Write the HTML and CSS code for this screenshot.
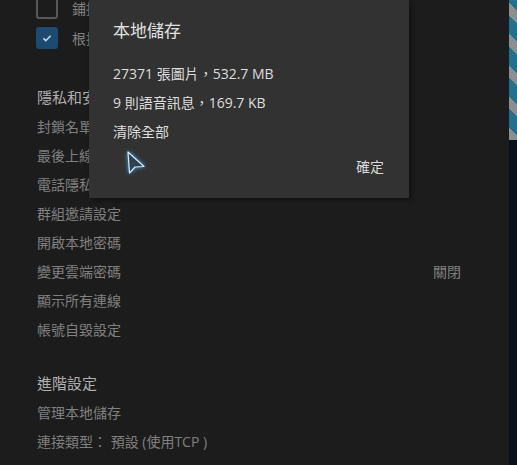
FILE: index.html
```html
<!DOCTYPE html>
<html lang="zh-Hant">
<head>
  <meta charset="UTF-8" />
  <title>設定</title>
  <link rel="stylesheet" href="styles.css">
</head>
<body>
  <div class="page">
    <div class="settings">
      <div class="check-row">
        <span class="box"></span>
        <span class="check-label">鋪排聊天背景</span>
      </div>
      <div class="check-row">
        <span class="box checked">
          <svg viewBox="0 0 20 20"><path d="M6 10.5 L8.7 13 L14 7.5" /></svg>
        </span>
        <span class="check-label">根據日間模式切換</span>
      </div>

      <h3 class="section">隱私和安全</h3>
      <div class="item">封鎖名單</div>
      <div class="item">最後上線時間</div>
      <div class="item">電話隱私設定</div>
      <div class="item">群組邀請設定</div>
      <div class="item">開啟本地密碼</div>
      <div class="item"><span>變更雲端密碼</span><span class="value">關閉</span></div>
      <div class="item">顯示所有連線</div>
      <div class="item">帳號自毀設定</div>

      <h3 class="section advanced">進階設定</h3>
      <div class="item">管理本地儲存</div>
      <div class="item">連接類型： 預設 (使用TCP )</div>
    </div>
    <div class="edge"></div>
  </div>

  <div class="dialog">
    <h2 class="dialog-title">本地儲存</h2>
    <p class="line">27371 張圖片，532.7 MB</p>
    <p class="line">9 則語音訊息，169.7 KB</p>
    <p class="line">清除全部</p>
    <div class="actions">
      <button class="ok">確定</button>
    </div>
  </div>

  <svg class="cursor" viewBox="0 0 22 26">
    <path d="M2 1 L3.5 22 L9 16 L18 15.5 Z" />
  </svg>
</body>
</html>
```

FILE: styles.css
```css
* {
  margin: 0;
  padding: 0;
  box-sizing: border-box;
}
body {
  background: #1c1c1c;
  font-family: "Open Sans", "Noto Sans CJK TC", sans-serif;
  overflow: hidden;
  height: 465px;
}
.page {
  display: flex;
  height: 465px;
}
.settings {
  flex: 1;
  padding: 0 48px 0 36px;
  margin-top: -7px;
}
.check-row {
  display: flex;
  align-items: center;
  height: 30px;
  gap: 14px;
}
.box {
  width: 22px;
  height: 22px;
  border: 2px solid #585858;
  border-radius: 3px;
  display: flex;
  align-items: center;
  justify-content: center;
}
.box.checked {
  background: #1c4a71;
  border-color: #1c4a71;
}
.box svg {
  width: 20px;
  height: 20px;
  fill: none;
  stroke: #c9d6e2;
  stroke-width: 1.8;
}
.check-label {
  font-size: 14px;
  color: #808080;
}
.section {
  font-size: 15px;
  font-weight: normal;
  color: #b0b0b0;
  height: 29px;
  line-height: 29px;
  margin-top: 30px;
  padding-left: 1px;
}
.section.advanced {
  margin-top: 25px;
}
.item {
  display: flex;
  justify-content: space-between;
  height: 29px;
  line-height: 29px;
  font-size: 14px;
  color: #808080;
  padding-left: 1px;
}
.edge {
  width: 8px;
  background:
    repeating-linear-gradient(45deg, #8b8f92 0 9px, #21708d 9px 22px) top / 8px 140px no-repeat,
    #0a1119;
}
.dialog {
  position: absolute;
  left: 89px;
  top: 0;
  width: 320px;
  height: 198px;
  background: #323232;
  box-shadow: 2px 2px 6px rgba(0, 0, 0, 0.45);
  padding: 17px 24px 0 24px;
  color: #dedede;
}
.dialog-title {
  font-size: 17px;
  font-weight: normal;
  line-height: 28px;
  margin-bottom: 14px;
  color: #e2e2e2;
}
.line {
  font-size: 14px;
  line-height: 29px;
}
.actions {
  display: flex;
  justify-content: flex-end;
  margin-top: 10px;
}
.ok {
  background: none;
  border: none;
  font-family: inherit;
  font-size: 14px;
  color: #d8d8d8;
  margin-right: 1px;
}
.cursor {
  position: absolute;
  left: 126px;
  top: 151px;
  width: 22px;
  height: 26px;
  overflow: visible;
  filter: drop-shadow(0 0 2px #4aa3e8);
}
.cursor path {
  fill: #2f4253;
  stroke: #d6ecfb;
  stroke-width: 1.2;
  stroke-linejoin: round;
}
```
